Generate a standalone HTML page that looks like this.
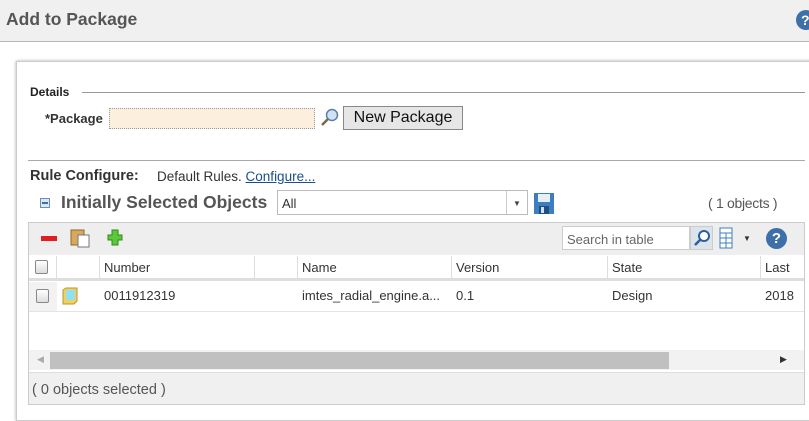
<!DOCTYPE html>
<html><head><style>
*{box-sizing:border-box;margin:0;padding:0}
body{width:809px;height:409px;overflow:hidden;background:#fff;font-family:"Liberation Sans",Arial,sans-serif;font-size:13px;color:#333;position:relative}
.a{position:absolute}
.hd{left:0;top:0;width:809px;height:42px;background:#f0f0f0;border-bottom:1px solid #b8b8b8}
.panel{left:16px;top:61px;width:800px;height:360px;border:1px solid #ccc;box-shadow:0 0 3px #aaa;background:#fff}
.cb{width:13px;height:14px;border:1px solid #888;border-radius:2px;background:linear-gradient(#fff,#ddd)}
.th{top:256px;height:25px;border-right:1px solid #ddd;border-bottom:3px solid #ddd;font-size:13px;padding:4px 0 0 4px}
</style></head><body>
<div class="a hd"></div>
<div class="a" style="left:6px;top:9px;font-size:17.5px;font-weight:bold;color:#555">Add to Package</div>
<div class="a" style="left:796px;top:10px;width:20px;height:20px;border-radius:50%;background:#3d6fa8;color:#fff;font-weight:bold;font-size:14px;padding-left:5px;line-height:20px">?</div>
<div class="a panel"></div>
<div class="a" style="left:30px;top:85px;font-size:12px;font-weight:bold;color:#222">Details</div>
<div class="a" style="left:82px;top:92px;width:723px;border-top:1px solid #999"></div>
<div class="a" style="left:45px;top:111px;font-size:13px;font-weight:bold;color:#333">*Package</div>
<div class="a" style="left:109px;top:108px;width:206px;height:21px;background:#fdefdd;border:1px dotted #999"></div>
<svg class="a" style="left:320px;top:108px" width="20" height="18"><circle cx="12" cy="7" r="5.5" fill="#cfe3f5" stroke="#5a7fa8" stroke-width="1.5"/><line x1="8" y1="11" x2="2" y2="17" stroke="#7a6a40" stroke-width="2.5"/></svg>
<div class="a" style="left:343px;top:106px;width:120px;height:24px;border:1px solid #888;background:#e6e6e6;font-size:16px;text-align:center;line-height:22px;color:#111">New Package</div>
<div class="a" style="left:28px;top:160px;width:777px;border-top:1px solid #aaa"></div>
<div class="a" style="left:30px;top:168px;font-size:14.5px;font-weight:bold;color:#333">Rule Configure:</div>
<div class="a" style="left:157px;top:169px;font-size:13.5px;color:#333">Default Rules. <span style="color:#1a4f8c;text-decoration:underline">Configure...</span></div>
<div class="a" style="left:40px;top:198px;width:10px;height:10px;border:1px solid #6b8fb8;background:#dbe7f3"><div style="margin:3px 1px;height:2px;background:#3d6fa8"></div></div>
<div class="a" style="left:61px;top:192px;font-size:17.5px;font-weight:bold;color:#555">Initially Selected Objects</div>
<div class="a" style="left:277px;top:190px;width:251px;height:25px;border:1px solid #bbb;font-size:13px;padding:5px 0 0 4px">All<span class="a" style="left:228px;top:0;height:23px;border-left:1px solid #ccc;width:22px;font-size:8px;padding:8px 0 0 6px;color:#444">▼</span></div>
<svg class="a" style="left:534px;top:193px" width="20" height="21"><rect x="0" y="0" width="20" height="21" fill="#3c7fc1"/><rect x="4" y="1" width="12" height="8" fill="#e8eef5"/><rect x="5" y="13" width="10" height="8" fill="#1f4f80"/><rect x="7" y="14" width="3" height="6" fill="#cfe0f0"/></svg>
<div class="a" style="left:708px;top:195px;font-size:14px;letter-spacing:-0.3px;color:#555">( 1 objects )</div>
<div class="a" style="left:28px;top:222px;width:777px;height:183px;border:1px solid #ccc"></div>
<div class="a" style="left:29px;top:223px;width:775px;height:32px;background:#eee"></div>
<div class="a" style="left:41px;top:236px;width:16px;height:5px;background:#e02020"></div>
<svg class="a" style="left:70px;top:228px" width="22" height="20"><rect x="1" y="2" width="13" height="15" fill="#d9a95a" stroke="#8a6a30"/><rect x="8" y="7" width="11" height="12" fill="#fff" stroke="#777"/></svg>
<svg class="a" style="left:107px;top:229px" width="16" height="17"><path d="M5 1h6v5h4v5h-4v5H5v-5H1V6h4z" fill="#5cc83a" stroke="#2d8a1a"/></svg>
<div class="a" style="left:562px;top:226px;width:128px;height:24px;background:#fff;border:1px solid #ccc;font-size:13px;color:#666;padding:5px 0 0 4px">Search in table</div>
<div class="a" style="left:690px;top:226px;width:23px;height:24px;background:#dde3ea;border:1px solid #ccc"></div>
<svg class="a" style="left:693px;top:229px" width="18" height="18"><circle cx="11" cy="7" r="5" fill="#fff" stroke="#2a5fa0" stroke-width="2"/><line x1="7" y1="11" x2="2" y2="16" stroke="#2a5fa0" stroke-width="2.5"/></svg>
<svg class="a" style="left:719px;top:227px" width="14" height="22"><rect x="1" y="1" width="12" height="20" fill="#fff" stroke="#3c7fc1"/><path d="M1 6h12M1 11h12M1 16h12M7 6v15" stroke="#3c7fc1"/></svg>
<div class="a" style="left:743px;top:234px;font-size:8px;color:#333">▼</div>
<div class="a" style="left:766px;top:228px;width:21px;height:21px;border-radius:50%;background:#3d6fa8;color:#fff;font-weight:bold;font-size:15px;text-align:center;line-height:21px">?</div>
<div class="a th" style="left:29px;width:28px"><div class="cb" style="margin:0 0 0 2px"></div></div>
<div class="a th" style="left:57px;width:43px"></div>
<div class="a th" style="left:100px;width:155px">Number</div>
<div class="a th" style="left:255px;width:43px"></div>
<div class="a th" style="left:298px;width:154px">Name</div>
<div class="a th" style="left:452px;width:156px">Version</div>
<div class="a th" style="left:608px;width:153px">State</div>
<div class="a th" style="left:761px;width:43px;border-right:none">Last</div>
<div class="a" style="left:29px;top:311px;width:775px;border-top:1px solid #e4e4e4"></div>
<div class="a" style="left:29px;top:282px;width:28px;height:29px;background:#f2f2f2"></div>
<div class="a cb" style="left:36px;top:289px"></div>
<svg class="a" style="left:62px;top:287px" width="16" height="18"><path d="M1 3l3-2h11v13l-3 3H1z" fill="#f0d060" stroke="#b8962a"/><rect x="4" y="3" width="9" height="10" fill="#8fe0f0"/></svg>
<div class="a" style="left:104px;top:288px">0011912319</div>
<div class="a" style="left:302px;top:288px">imtes_radial_engine.a...</div>
<div class="a" style="left:456px;top:288px">0.1</div>
<div class="a" style="left:612px;top:288px">Design</div>
<div class="a" style="left:765px;top:288px;width:39px;overflow:hidden">2018</div>
<div class="a" style="left:29px;top:350px;width:775px;height:20px;background:#f2f2f2"></div>
<div class="a" style="left:50px;top:352px;width:619px;height:17px;background:#c0c0c0"></div>
<div class="a" style="left:37px;top:354px;font-size:9px;color:#aaa">◀</div>
<div class="a" style="left:780px;top:354px;font-size:9px;color:#333">▶</div>
<div class="a" style="left:29px;top:372px;width:775px;height:32px;background:#f0f0f0;border-top:1px solid #ddd"></div>
<div class="a" style="left:32px;top:382px;font-size:14.5px;color:#555">( 0 objects selected )</div>
</body></html>
